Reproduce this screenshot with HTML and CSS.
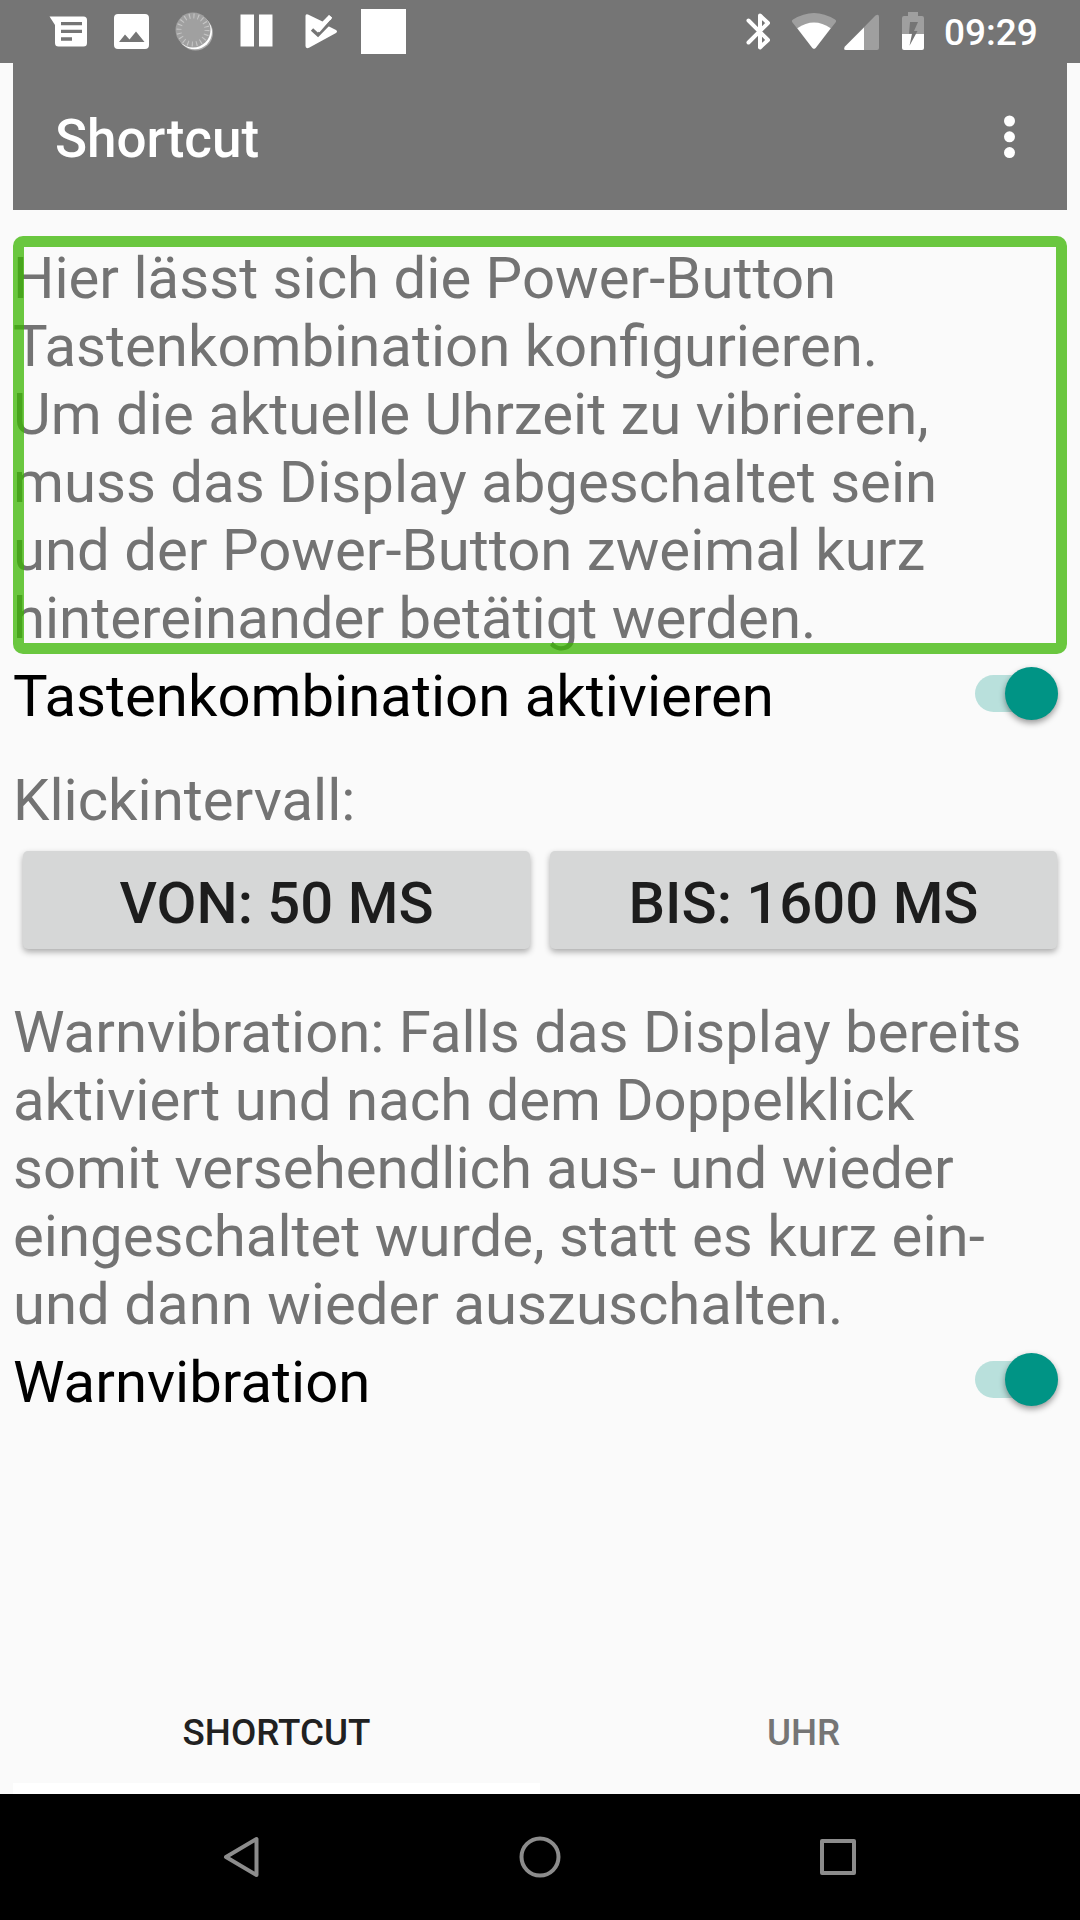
FILE: index.html
```html
<!DOCTYPE html>
<html lang="de">
<head>
<meta charset="utf-8">
<title>Shortcut</title>
<link rel="stylesheet" href="styles.css">
</head>
<body>
<header class="status">
  <svg class="status-icons" width="420" height="63" viewBox="0 0 420 63" fill="#fff">
    <path fill-rule="evenodd" d="M49.500 16.500H83.500Q87 16.500 87 20V43Q87 46.500 83.500 46.500H58.500Q55 46.500 55 43V25ZM61 22V25.300H82V22ZM61 29.700V33H82V29.700ZM61 37.300V40.700H72V37.300Z"/>
    <path fill-rule="evenodd" d="M118 14H145Q149 14 149 18V45Q149 49 145 49H118Q114 49 114 45V18Q114 14 118 14ZM119 42H144.500L136 31.500L129.500 39.500L125 34.500Z"/>
    <circle cx="195.500" cy="33" r="17.500" fill="#a9a9a9"/>
    <circle cx="194.700" cy="32" r="17.300"/>
    <circle cx="193" cy="30" r="17.500" fill="#a0a0a0"/>
    <circle cx="193" cy="30" r="14" fill="none" stroke="#c4c4c4" stroke-width="5" stroke-dasharray="1.100 3.298"/>
    <path d="M240.500 14.500h13.500v32h-13.500zM259 14.500h13.500v32h-13.500z"/>
    <path d="M305.500 16Q305.500 13.500 308 14.500L322.500 21.500L329 15L332 17.500L328 26L336 30Q338 31.500 336 33L309 47.800Q305.500 49 305.500 46Z"/>
    <path d="M312 29.500L318 35L331.500 21" fill="none" stroke="#757575" stroke-width="3.400"/>
    <path d="M318 31L330.500 16.500" fill="none" stroke="#fff" stroke-width="4"/>
    <path d="M361 9h45v45h-45z"/>
  </svg>
  <svg class="status-icons" width="205" height="63" viewBox="735 0 205 63" fill="#fff">
    <path d="M748.500 20.500L768 40L760 47.500V15.500L768 23L748.500 42.500" fill="none" stroke="#fff" stroke-width="4" stroke-linejoin="round" stroke-linecap="round"/>
    <path d="M792.500 22.500Q791 20.800 793 19.600Q814 6.500 835 19.600Q837 20.800 835.500 22.500L816 47.500Q814 50 812 47.500Z" fill="#9f9f9f"/>
    <path d="M797.300 28.300Q814 16.500 830.700 28.300L816 47.500Q814 50 812 47.500Z"/>
    <path d="M845 46.500L875.500 15.500Q879 13.500 879 17V48Q879 50 877 50H846Q843 50 845 46.500Z" fill="#9f9f9f"/>
    <path d="M845 46.500L864 27.500V50H846Q843 50 845 46.500Z"/>
    <path d="M908 12h10v4h4q2 0 2 2v16h-22V18q0-2 2-2h4z" fill="#9f9f9f"/>
    <path d="M902 34h22v14q0 2-2 2h-18q-2 0-2-2z"/>
    <path d="M910 22h8l-4 9h3.500l-8 14.700 2.500-12h-3z" fill="#757575"/>
  </svg>
  <time class="clock">09:29</time>
</header>
<main class="screen">
  <div class="toolbar">
    <h1 class="title">Shortcut</h1>
    <svg width="12" height="44" viewBox="0 0 12 44" fill="#fff"><circle cx="6.500" cy="6" r="5.500"/><circle cx="6.500" cy="21.800" r="5.500"/><circle cx="6.500" cy="37.600" r="5.500"/></svg>
  </div>
  <p class="text intro">Hier lässt sich die Power-Button<br>Tastenkombination konfigurieren.<br>Um die aktuelle Uhrzeit zu vibrieren,<br>muss das Display abgeschaltet sein<br>und der Power-Button zweimal kurz<br>hintereinander betätigt werden.</p>
  <div class="switch-row"><span>Tastenkombination aktivieren</span><span class="switch"><i class="thumb"></i></span></div>
  <p class="text interval">Klickintervall:</p>
  <div class="buttons"><button class="btn">VON: 50 MS</button><button class="btn">BIS: 1600 MS</button></div>
  <p class="text warn">Warnvibration: Falls das Display bereits<br>aktiviert und nach dem Doppelklick<br>somit versehendlich aus- und wieder<br>eingeschaltet wurde, statt es kurz ein-<br>und dann wieder auszuschalten.</p>
  <div class="switch-row"><span>Warnvibration</span><span class="switch"><i class="thumb"></i></span></div>
  <div class="tabs"><div class="tab active">SHORTCUT</div><div class="tab">UHR</div></div>
</main>
<footer class="nav">
  <svg width="1080" height="126" viewBox="0 0 1080 126" fill="none" stroke="#8c8c8c" stroke-width="4" stroke-linejoin="round">
    <path d="M256.500 45V81L226 63Z"/><circle cx="540" cy="63" r="18.500"/><rect x="822" y="47" width="32" height="32"/>
  </svg>
</footer>
</body>
</html>
```
FILE: styles.css
```css
* { box-sizing: border-box; }
body {
  margin: 0;
  width: 1080px;
  height: 1920px;
  display: flex;
  flex-direction: column;
  background: #fafafa;
  font-family: Roboto, sans-serif;
  overflow: hidden;
}
.status {
  height: 63px;
  background: #757575;
  color: #fff;
  display: flex;
  justify-content: space-between;
}
.status-icons:nth-of-type(2) { margin-left: auto; }
.clock {
  width: 140px;
  padding-left: 4px;
  font-size: 37px;
  font-weight: 500;
  line-height: 66px;
}
.screen {
  flex: 1;
  margin: 0 13px;
  display: flex;
  flex-direction: column;
}
.toolbar {
  height: 147px;
  padding: 0 52px 0 42px;
  background: #757575;
  color: #fff;
  display: flex;
  align-items: center;
  justify-content: space-between;
}
.title {
  margin: 0;
  font-size: 53px;
  font-weight: 500;
  line-height: 62px;
  padding-top: 4px;
}
.text {
  margin: 0;
  font-size: 58.1px;
  line-height: 68px;
  color: #737373;
  white-space: nowrap;
}
.intro {
  position: relative;
  margin-top: 26px;
  height: 418px;
  padding-top: 8px;
}
.intro::after {
  content: "";
  position: absolute;
  inset: 0;
  border: 11px solid rgba(58, 181, 0, .75);
  border-radius: 10px;
}
.switch-row {
  height: 78px;
  display: flex;
  align-items: center;
  justify-content: space-between;
  font-size: 58.1px;
  line-height: 68px;
  color: #000;
  padding: 5px 9px 0 0;
}
.switch {
  width: 83px;
  height: 37px;
  margin-top: -5px;
  border-radius: 19px;
  background: #b9e0dc;
  display: flex;
  align-items: center;
  justify-content: flex-end;
}
.thumb {
  width: 53px;
  height: 53px;
  flex: none;
  border-radius: 50%;
  background: #009485;
  box-shadow: 0 3px 6px rgba(0, 0, 0, .4);
}
.interval { margin-top: 34px; }
.buttons {
  display: flex;
  gap: 20px;
  padding: 0 10px;
  margin-top: 17px;
}
.btn {
  flex: 1;
  height: 98px;
  padding: 5px 0 0;
  border: 0;
  border-radius: 5px;
  background: #d6d7d7;
  color: #1d1d1d;
  font: 500 58px/68px Roboto, sans-serif;
  box-shadow: 0 3px 6px rgba(0, 0, 0, .32);
}
.warn {
  margin-top: 49px;
  margin-bottom: 2px;
}
.tabs {
  margin-top: auto;
  height: 126px;
  display: flex;
}
.tab {
  flex: 1;
  border-bottom: 11px solid transparent;
  padding-top: 14px;
  display: flex;
  align-items: center;
  justify-content: center;
  font-size: 36.75px;
  font-weight: 500;
  color: #757575;
}
.active {
  color: #212121;
  border-color: #fff;
}
.nav {
  height: 126px;
  background: #000;
}
.nav svg { display: block; }
```
